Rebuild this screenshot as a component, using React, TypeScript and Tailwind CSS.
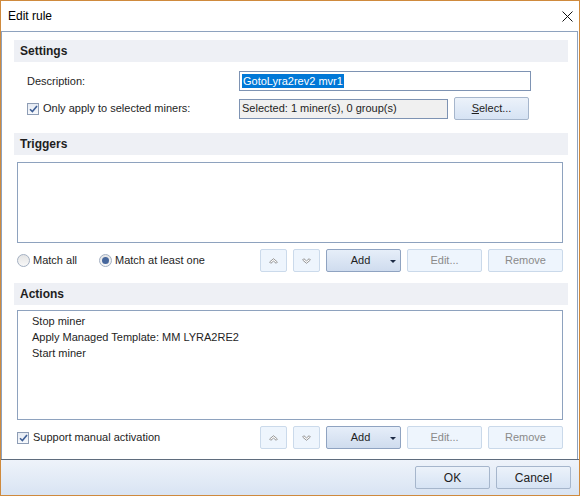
import React from 'react';

const font = "font-['Liberation_Sans',Arial,sans-serif]";

function SectionBand({ title }: { title: string }) {
  return (
    <div className="h-[22px] bg-[#eef0f5] px-[6px] flex items-center text-[12px] font-bold text-[#1e1e1e]">
      {title}
    </div>
  );
}

function CheckBox() {
  return (
    <span className="w-[12px] h-[12px] border border-[#8e9db5] bg-gradient-to-b from-[#e6ebf3] to-[#f7f9fc] flex items-center justify-center shrink-0">
      <svg width="9" height="8" viewBox="0 0 9 8">
        <path d="M1 4.2 L3.4 6.6 L8 1" fill="none" stroke="#3f5f96" strokeWidth="1.6" />
      </svg>
    </span>
  );
}

function Radio({ checked }: { checked?: boolean }) {
  return (
    <span className="w-[13px] h-[13px] rounded-full border border-[#a3b0c2] bg-gradient-to-b from-[#e4e4e4] to-[#f8f8f8] flex items-center justify-center shrink-0">
      {checked && <span className="w-[7px] h-[7px] rounded-full bg-[#47679c]" />}
    </span>
  );
}

function ArrowButton({ dir }: { dir: 'up' | 'down' }) {
  return (
    <div className="w-[27px] h-[23px] rounded-[2px] border border-[#cbdaeb] bg-[#eef5fd] flex items-center justify-center">
      {dir === 'up' ? (
        <svg width="9" height="6" viewBox="0 0 9 6">
          <path d="M0.6 4 L4.5 0.7 L8.4 4 L7.2 5.3 L4.5 3.1 L1.8 5.3 Z" fill="#fff" stroke="#8c8c8c" strokeWidth="0.9" strokeLinejoin="round" />
        </svg>
      ) : (
        <svg width="9" height="6" viewBox="0 0 9 6">
          <path d="M0.6 2 L1.8 0.7 L4.5 2.9 L7.2 0.7 L8.4 2 L4.5 5.3 Z" fill="#fff" stroke="#8c8c8c" strokeWidth="0.9" strokeLinejoin="round" />
        </svg>
      )}
    </div>
  );
}

function ButtonRow() {
  return (
    <div className="flex gap-[6px] text-[11px]">
      <ArrowButton dir="up" />
      <ArrowButton dir="down" />
      <div className="w-[75px] h-[23px] rounded-[2px] border border-[#8fa3c1] bg-gradient-to-b from-[#e6eef9] to-[#cfdcee] flex items-center relative text-[#1e1e1e]">
        <span className="flex-1 text-center pr-[6px]">Add</span>
        <svg className="absolute right-[4px] top-[10px]" width="6" height="3" viewBox="0 0 6 3">
          <path d="M0 0 H6 L3 3 Z" fill="#1c2a44" />
        </svg>
      </div>
      <div className="w-[75px] h-[23px] rounded-[2px] border border-[#cad9ea] bg-[#eef5fd] flex items-center justify-center text-[#8a8a8a]">
        Edit...
      </div>
      <div className="w-[75px] h-[23px] rounded-[2px] border border-[#cad9ea] bg-[#eef5fd] flex items-center justify-center text-[#8a8a8a]">
        Remove
      </div>
    </div>
  );
}

function DialogButton({ label }: { label: string }) {
  return (
    <div className="w-[75px] h-[23px] rounded-[2px] border border-[#a6b6cc] bg-gradient-to-b from-[#ecf2fa] to-[#d6e3f4] flex items-center justify-center text-[12px] text-[#1e1e1e]">
      {label}
    </div>
  );
}

export default function App() {
  const actions = ['Stop miner', 'Apply Managed Template: MM LYRA2RE2', 'Start miner'];

  return (
    <div className={`w-[588px] h-[497px] bg-white ${font}`}>
      <div className="w-[580px] h-[496px] border border-[#cf8a3d] bg-white flex flex-col">
        {/* title bar */}
        <div className="h-[30px] flex items-center justify-between pl-[7px] pr-[5px] text-[12px] text-black shrink-0">
          <span>Edit rule</span>
          <svg width="11" height="11" viewBox="0 0 11 11" className="mr-[1px]">
            <path d="M0.5 0.5 L10.5 10.5 M10.5 0.5 L0.5 10.5" stroke="#111" strokeWidth="1" />
          </svg>
        </div>

        {/* client area */}
        <div className="flex-1 border-t border-x border-[#8ea2be] mr-[1px] pl-[12px] pr-[9px] pt-[8px] text-[11px] text-[#1e1e1e]">
          <SectionBand title="Settings" />

          <div className="flex items-center h-[20px] mt-[9px] pl-[13px]">
            <span className="w-[212px]">Description:</span>
            <div className="w-[292px] h-[20px] border border-[#7e93b3] bg-white flex items-center pl-[2px]">
              <span className="bg-[#0078d7] text-white leading-[14px] px-[1px]">GotoLyra2rev2 mvr1</span>
            </div>
          </div>

          <div className="flex items-center h-[23px] mt-[6px] pl-[13px]">
            <div className="w-[212px] flex items-center gap-[4px]">
              <CheckBox />
              <span>Only apply to selected miners:</span>
            </div>
            <div className="w-[209px] h-[20px] border border-[#7e93b3] bg-[#f0f0f0] flex items-center pl-[2px]">
              Selected: 1 miner(s), 0 group(s)
            </div>
            <div className="ml-[6px] w-[75px] h-[23px] rounded-[2px] border border-[#a6b6cc] bg-gradient-to-b from-[#ecf2fa] to-[#d6e3f4] flex items-center justify-center">
              <span>
                <span className="underline">S</span>elect...
              </span>
            </div>
          </div>

          <div className="mt-[13px]">
            <SectionBand title="Triggers" />
          </div>
          <div className="ml-[3px] w-[546px] h-[81px] mt-[7px] border border-[#8ea2be] bg-white" />

          <div className="ml-[3px] w-[546px] mt-[6px] flex items-center justify-between">
            <div className="flex items-center">
              <Radio />
              <span className="ml-[3px]">Match all</span>
              <span className="ml-[22px]">
                <Radio checked />
              </span>
              <span className="ml-[3px]">Match at least one</span>
            </div>
            <ButtonRow />
          </div>

          <div className="mt-[11px]">
            <SectionBand title="Actions" />
          </div>
          <div className="ml-[3px] w-[546px] h-[110px] mt-[5px] border border-[#8ea2be] bg-white pt-[2px] pl-[14px]">
            {actions.map((a) => (
              <div key={a} className="h-[16px] leading-[16px]">
                {a}
              </div>
            ))}
          </div>

          <div className="ml-[3px] w-[546px] mt-[6px] flex items-center justify-between">
            <div className="flex items-center gap-[4px]">
              <CheckBox />
              <span>Support manual activation</span>
            </div>
            <ButtonRow />
          </div>
        </div>

        {/* footer */}
        <div className="h-[36px] shrink-0 border-t border-[#5f6c7d] bg-gradient-to-b from-[#eef3fa] to-[#d9e4f3] flex items-center justify-end gap-[6px] pr-[8px]">
          <DialogButton label="OK" />
          <DialogButton label="Cancel" />
        </div>
      </div>
    </div>
  );
}
